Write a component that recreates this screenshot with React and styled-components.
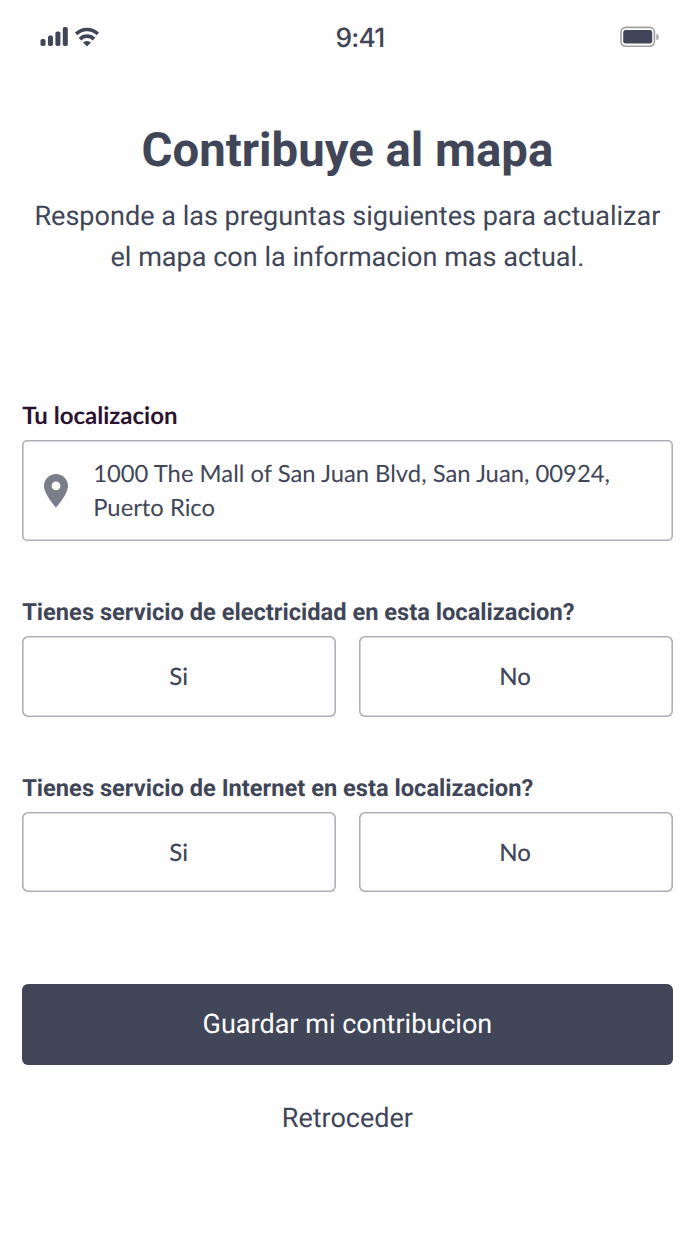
import styled, { createGlobalStyle } from "styled-components";
import { useState } from "react";

const App = () => {
  const [answers, setAnswers] = useState({});

  const onAnswer = (id, value) => {
    setAnswers({ ...answers, [id]: value });
  };

  return (
    <Container>
      <GlobalStyle />
      <StatusBar>
        <Signal>
          <svg width="28" height="20" viewBox="0 0 28 20" fill="#404658">
            <rect x="0.5" y="12" width="5" height="7" rx="1.8" />
            <rect x="8" y="8.6" width="5" height="10.4" rx="1.8" />
            <rect x="15.4" y="4.5" width="5" height="14.5" rx="1.8" />
            <rect x="22.8" y="0" width="5" height="19" rx="1.8" />
          </svg>
          <svg width="24" height="20" viewBox="0 0 24 20" fill="none">
            <g stroke="#404658" strokeWidth="3.7">
              <path d="M1.2 6.9A15.4 15.4 0 0 1 22.8 6.9" />
              <path d="M5 12.1A9.9 9.9 0 0 1 19 12.1" />
            </g>
            <path
              d="M12 19.4L8 15.6A5.6 5.6 0 0 1 16 15.6Z"
              fill="#404658"
            />
          </svg>
        </Signal>
        <Time>9:41</Time>
        <svg width="40" height="22" viewBox="0 0 40 22">
          <rect
            x="1"
            y="1.4"
            width="33.4"
            height="18.8"
            rx="4.6"
            fill="none"
            stroke="#a0a0a3"
            strokeWidth="1.6"
          />
          <rect x="3.2" y="4" width="29" height="13.6" rx="2.4" fill="#404658" />
          <path d="M36.4 7.7C39.4 8.6 39.4 13.2 36.4 14.1Z" fill="#a0a0a3" />
        </svg>
      </StatusBar>

      <Title>Contribuye al mapa</Title>
      <Description>
        Responde a las preguntas siguientes para actualizar el mapa con la
        informacion mas actual.
      </Description>

      <Location>
        <LocationLabel>Tu localizacion</LocationLabel>
        <AddressBox>
          <Pin viewBox="0 0 24 34">
            <path
              fillRule="evenodd"
              fill="#7a7e8b"
              d="M12 0C5.4 0 0 5.3 0 11.8C0 20.6 12 33.6 12 33.6S24 20.6 24 11.8C24 5.3 18.6 0 12 0ZM12 16.2A4.4 4.4 0 1 1 12 7.4A4.4 4.4 0 0 1 12 16.2Z"
            />
          </Pin>
          <Address>
            1000 The Mall of San Juan Blvd, San Juan, 00924, Puerto Rico
          </Address>
        </AddressBox>
      </Location>

      {questions.map(({ id, title }) => {
        return (
          <Question key={id}>
            <QuestionTitle>{title}</QuestionTitle>
            <Options>
              {["Si", "No"].map((value) => (
                <Option
                  key={value}
                  $active={answers[id] === value}
                  onClick={() => onAnswer(id, value)}
                >
                  {value}
                </Option>
              ))}
            </Options>
          </Question>
        );
      })}

      <SaveButton>Guardar mi contribucion</SaveButton>
      <BackButton>Retroceder</BackButton>
    </Container>
  );
};

export default App;

const questions = [
  { id: "power", title: "Tienes servicio de electricidad en esta localizacion?" },
  { id: "internet", title: "Tienes servicio de Internet en esta localizacion?" },
];

const GlobalStyle = createGlobalStyle`
  * {
    box-sizing: border-box;
  }
  body {
    margin: 0;
    background-color: #fefefe;
    color: #404658;
    font-family: Roboto, sans-serif;
    text-rendering: geometricPrecision;
  }
  button {
    border: none;
    padding: 0;
    background-color: transparent;
    color: inherit;
    cursor: pointer;
    text-rendering: inherit;
  }
`;

const Container = styled.div`
  width: 694.8px;
  min-height: 1244px;
  padding: 0 22.2px;
  display: flex;
  flex-direction: column;
`;

const StatusBar = styled.div`
  height: 74px;
  padding: 0 12.6px 0 17.8px;
  display: grid;
  grid-template-columns: 1fr auto 1fr;
  align-items: center;
  & > :last-child {
    justify-self: end;
  }
`;
const Signal = styled.div`
  display: flex;
  gap: 7px;
`;
const Time = styled.span`
  font-family: Inter, sans-serif;
  font-size: 26.4px;
  font-weight: 500;
  letter-spacing: -0.8px;
  padding: 1px 0 0 20px;
`;

const Title = styled.h1`
  margin: 46px 0 0;
  font-size: 47.3px;
  line-height: 60px;
  font-weight: 700;
  text-align: center;
`;
const Description = styled.p`
  margin: 16px 0 0;
  font-size: 27.05px;
  line-height: 40.5px;
  text-align: center;
`;

const Location = styled.section`
  margin-top: 122px;
`;
const LocationLabel = styled.div`
  font-family: Lato, sans-serif;
  font-size: 24px;
  line-height: 34px;
  font-weight: 700;
  color: #2b1230;
`;
const AddressBox = styled.div`
  margin-top: 7px;
  height: 101px;
  padding: 0 22px;
  display: flex;
  align-items: center;
  gap: 25px;
  border-radius: 5px;
  box-shadow: inset 0 0 0 1.6px #aeb0b9;
`;
const Pin = styled.svg`
  flex-shrink: 0;
  width: 24px;
  height: 34px;
`;
const Address = styled.div`
  padding-top: 2px;
  font-family: Lato, sans-serif;
  font-size: 23.8px;
  line-height: 33.6px;
`;

const Question = styled.section`
  margin-top: 54px;
`;
const QuestionTitle = styled.div`
  font-size: 23.65px;
  line-height: 34px;
  font-weight: 700;
`;
const Options = styled.div`
  margin-top: 7px;
  display: grid;
  grid-template-columns: 1fr 1fr;
  gap: 22.4px;
`;
const Option = styled.button`
  height: 80.6px;
  padding: 1.4px 1px 0 0;
  border-radius: 6px;
  box-shadow: inset 0 0 0 1.6px
    ${({ $active }) => ($active ? "#404658" : "#aeb0b9")};
  font-family: Lato, sans-serif;
  font-size: 24px;
  font-weight: 500;
`;

const SaveButton = styled.button`
  && {
    background-color: #404658;
    color: #fefefe;
  }
  margin-top: 92px;
  height: 81px;
  padding-bottom: 1px;
  border-radius: 6px;
  font-family: Roboto, sans-serif;
  font-size: 27px;
`;
const BackButton = styled.button`
  margin-top: 33px;
  height: 40px;
  font-family: Roboto, sans-serif;
  font-size: 27px;
`;
